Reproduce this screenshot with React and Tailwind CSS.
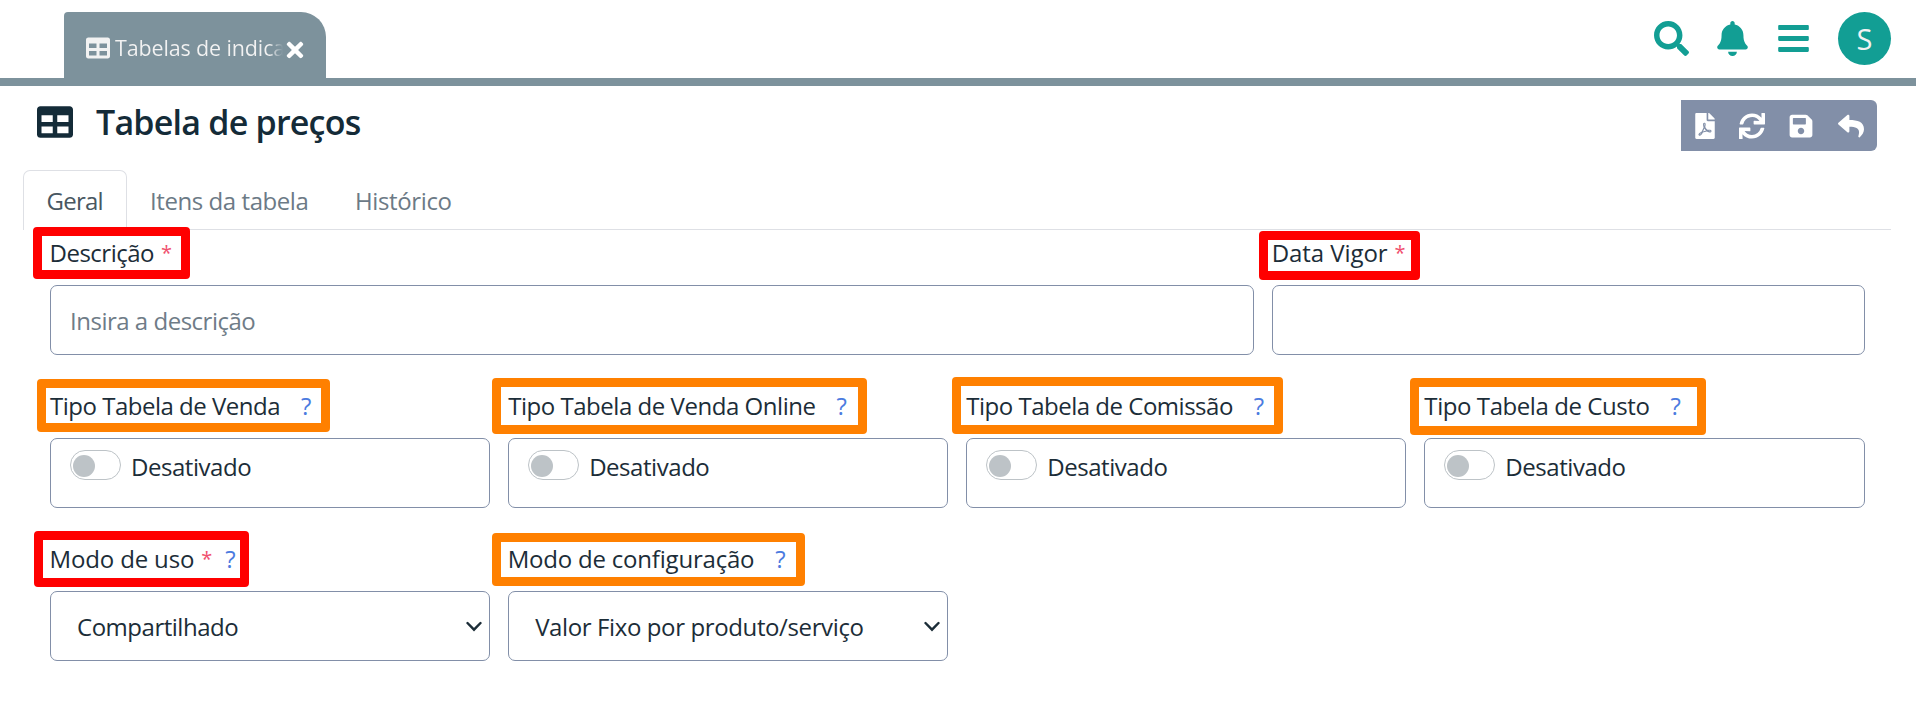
import { FaBars, FaBell, FaFilePdf, FaReply, FaSave, FaSearch, FaSync, FaTable, FaTimes } from "react-icons/fa";

function Highlight({ className }) {
  return <span className={`pointer-events-none absolute rounded-[4px] border-[9px] ${className}`} />;
}

function Field({ label, tracking, required, help, highlight, className, children }) {
  return (
    <div className={`relative h-[153px] ${className}`}>
      <Highlight className={highlight} />
      <div className="flex h-9 items-start whitespace-nowrap leading-9">
        <span className={tracking}>{label}</span>
        {required && <span className="ml-[7px] w-[10px] text-[20px] leading-[35px] text-[#f0506e]">*</span>}
        {help && <span className={`text-[#4b7be0] ${required ? "ml-[14px]" : "ml-[21px]"}`}>?</span>}
      </div>
      <div className="mt-[14px] h-[70px] rounded-[7px] border border-[#828fa8]">{children}</div>
    </div>
  );
}

function Toggle() {
  return (
    <div className="flex pl-[19px] pt-[11px]">
      <span className="flex h-[30px] w-[51px] items-center rounded-full border border-[#bdc3c7] pl-[2px] pt-[1px]">
        <span className="size-[22px] rounded-full bg-[#bdc3c7]" />
      </span>
      <span className="ml-[10px] leading-[34px] tracking-[-0.45px]">Desativado</span>
    </div>
  );
}

function Select({ value, tracking }) {
  return (
    <div className="flex h-full items-center justify-between pl-[26px] pr-[7px]">
      <span className={`pt-[2px] leading-9 ${tracking}`}>{value}</span>
      <svg className="h-[11px] w-[16px]" viewBox="0 0 16 11" fill="none" stroke="#1c2d38" strokeWidth="2.4" strokeLinecap="round">
        <path d="M1.5 2 L8 8.7 L14.5 2" />
      </svg>
    </div>
  );
}

export default function App() {
  return (
    <div className="h-[717px] overflow-hidden bg-white font-['Open_Sans','Noto_Sans',sans-serif] text-[24px] text-[#1c2d38]">
      <header className="flex h-[86px] items-start justify-between border-b-8 border-[#7d929c] pl-16 pr-[25px] pt-3">
        <div className="flex h-[66px] w-[262px] items-start rounded-tl-[4px] rounded-tr-[25px] bg-[#7d929c] pl-[22px] text-[#f2f2f2]">
          <FaTable className="mt-[24px] size-[24px] shrink-0" />
          <span className="ml-[5px] mt-[20px] w-[168px] shrink-0 whitespace-nowrap bg-linear-to-r from-[#f2f2f2] from-92% to-[#7d929c] bg-clip-text text-[21.5px] leading-8 tracking-[-0.14px] text-transparent">
            Tabelas de indica
          </span>
          <FaTimes className="mt-[26px] size-[24px] shrink-0 text-white" />
        </div>
        <div className="flex h-[53px] items-center text-[#129e94]">
          <FaSearch className="size-[35px]" />
          <FaBell className="ml-[26px] size-[35px]" />
          <FaBars className="ml-[26px] size-[35px]" />
          <span className="ml-[27px] flex size-[53px] items-center justify-center rounded-full bg-[#129e94] text-[29px] text-[#f2f2f2]">S</span>
        </div>
      </header>

      <div className="flex h-[84px] items-start justify-between pl-[37px] pr-[39px] pt-[14px]">
        <div className="-mt-px flex items-center">
          <FaTable className="size-[36px] text-[#142b38]" />
          <h1 className="ml-[23px] text-[34px] font-semibold leading-[46px] tracking-[-0.78px] text-[#142b38]">Tabela de preços</h1>
        </div>
        <div className="flex h-[51px] w-[196px] items-center rounded-r-[6px] bg-[#828fa8] pl-[11px] text-[26px] text-white">
          <FaFilePdf />
          <FaSync className="ml-[21px]" />
          <FaSave className="ml-[23px]" />
          <FaReply className="ml-[24px]" />
        </div>
      </div>

      <nav className="ml-[23px] mr-[25px] flex h-[60px] whitespace-nowrap text-[#6c7a86]">
        <span className="w-[104px] rounded-t-[7px] border border-b-0 border-[#dee0e5] pl-[22.5px] leading-[60px] tracking-[-0.75px] text-[#495761]">Geral</span>
        <span className="w-[205px] border-b border-[#dee0e5] pl-[23px] leading-[62px] tracking-[-0.43px]">Itens da tabela</span>
        <span className="flex-1 border-b border-[#dee0e5] pl-[23px] leading-[62px] tracking-[-0.38px]">Histórico</span>
      </nav>

      <main className="ml-[50px] mr-[51.5px] mt-[5px] grid grid-cols-12 gap-x-[18px]">
        <Field className="col-span-8" label="Descrição" tracking="-ml-[0.5px] tracking-[-0.5px]" required highlight="left-[-17px] top-[-8px] h-[52px] w-[157px] border-[#ff0000]">
          <span className="block pl-[19px] leading-[69px] tracking-[-0.49px] text-[#6f7c87]">Insira a descrição</span>
        </Field>
        <Field className="col-span-4" label="Data Vigor" tracking="tracking-[-0.06px]" required highlight="left-[-13px] top-[-4px] h-[49px] w-[161px] border-[#ff0000]" />
        <Field className="col-span-3" label="Tipo Tabela de Venda" tracking="tracking-[-0.49px]" help highlight="left-[-13px] top-[-9px] h-[53px] w-[293px] border-[#ff8000]">
          <Toggle />
        </Field>
        <Field className="col-span-3" label="Tipo Tabela de Venda Online" tracking="tracking-[-0.46px]" help highlight="left-[-16px] top-[-10px] h-[56px] w-[375px] border-[#ff8000]">
          <Toggle />
        </Field>
        <Field className="col-span-3" label="Tipo Tabela de Comissão" tracking="tracking-[-0.49px]" help highlight="left-[-14px] top-[-11px] h-[57px] w-[331px] border-[#ff8000]">
          <Toggle />
        </Field>
        <Field className="col-span-3" label="Tipo Tabela de Custo" tracking="tracking-[-0.43px]" help highlight="left-[-14px] top-[-10px] h-[57px] w-[296px] border-[#ff8000]">
          <Toggle />
        </Field>
        <Field className="col-span-3" label="Modo de uso" tracking="-ml-[0.5px] tracking-[-0.15px]" required help highlight="left-[-16px] top-[-10px] h-[56px] w-[215px] border-[#ff0000]">
          <Select value="Compartilhado" tracking="tracking-[-0.48px]" />
        </Field>
        <Field className="col-span-3" label="Modo de configuração" tracking="-ml-[0.5px] tracking-[-0.2px]" help highlight="left-[-16px] top-[-8px] h-[53px] w-[313px] border-[#ff8000]">
          <Select value="Valor Fixo por produto/serviço" tracking="tracking-[-0.38px]" />
        </Field>
      </main>
    </div>
  );
}
